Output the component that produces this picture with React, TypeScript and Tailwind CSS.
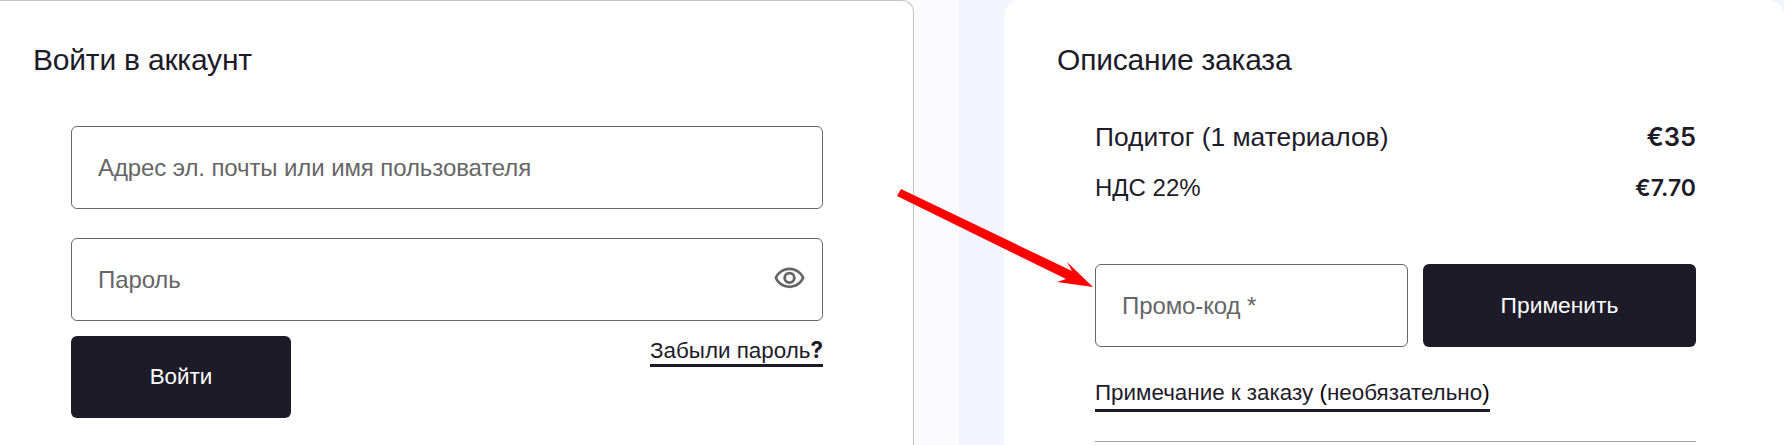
import { MdOutlineVisibility } from "react-icons/md";

const Field = ({ placeholder, className }: { placeholder: string; className: string }) => (
  <input
    className={`h-[83px] rounded-md border border-[#666] bg-white pl-[26px] text-[24px] tracking-[-0.1px] outline-none placeholder:text-[#666] ${className}`}
    placeholder={placeholder}
    type="text"
  />
);

const Arrow = () => (
  <svg className="absolute left-[890px] top-[180px]" width="210" height="115" viewBox="890 180 210 115">
    <polygon fill="#ff0000" points="901,189 1072,271 1067,262 1093,287 1057,282 1066,279 897,196" />
  </svg>
);

export default function App() {
  return (
    <div className="relative flex h-[445px] w-full overflow-hidden bg-[#f3f4fd] font-['Liberation_Sans',sans-serif] text-[#1e1b29]">
      {/* login side */}
      <div className="w-[959px] shrink-0 bg-[#fbfbfd]">
        <div className="h-full w-[914px] rounded-tr-xl border-t border-r border-[#c4c4c4] bg-white pt-[44px] pl-[33px]">
          <h2 className="text-[30px] leading-[30px] tracking-[-0.2px]">Войти в аккаунт</h2>
          <div className="mt-[51px] flex w-[752px] flex-col pl-[38px] box-content">
            <Field placeholder="Адрес эл. почты или имя пользователя" className="w-full" />
            <div className="relative mt-[29px]">
              <Field placeholder="Пароль" className="w-full" />
              <MdOutlineVisibility size={33} className="absolute top-[24px] right-[17px] text-[#666]" />
            </div>
            <div className="mt-[15px] flex items-start justify-between">
              <button className="h-[82px] w-[220px] rounded-md bg-[#1e1b29] text-[22.4px] text-white">Войти</button>
              <a className="border-b-[3px] border-[#1e1b29] text-[22.4px] leading-[27px]">
                Забыли пароль<span className="font-['Inter',sans-serif] font-bold">?</span>
              </a>
            </div>
          </div>
        </div>
      </div>

      {/* order side */}
      <div className="ml-[45px] flex-1 rounded-t-2xl bg-white pt-[45px] pl-[53px]">
        <h2 className="text-[30px] leading-[30px] tracking-[-0.2px]">Описание заказа</h2>
        <div className="pl-[38px]">
          <div className="mt-[46px] w-[601px]">
            <div className="flex items-center justify-between text-[26.4px] leading-[32px]">
              <span>Подитог (1 материалов)</span>
              <b className="font-['Inter',sans-serif] text-[25.5px] font-semibold">€35</b>
            </div>
            <div className="mt-[20px] flex items-center justify-between text-[24px] leading-[30px]">
              <span>НДС 22%</span>
              <b className="font-['Inter',sans-serif] text-[23px] font-semibold">€7.70</b>
            </div>
          </div>
          <div className="mt-[61px] flex w-[601px] gap-[15px]">
            <Field placeholder="Промо-код *" className="w-[313px]" />
            <button className="h-[83px] flex-1 rounded-md bg-[#1e1b29] text-[22.8px] text-white">Применить</button>
          </div>
          <a className="mt-[29px] inline-block border-b-[3px] border-[#1e1b29] text-[22.4px] leading-[33px]">
            Примечание к заказу <span className="font-medium text-black">(</span>необязательно<span className="font-medium text-black">)</span>
          </a>
          <hr className="mt-[29px] w-[601px] border-t border-[#a0a0a0]" />
        </div>
      </div>

      <Arrow />
    </div>
  );
}
